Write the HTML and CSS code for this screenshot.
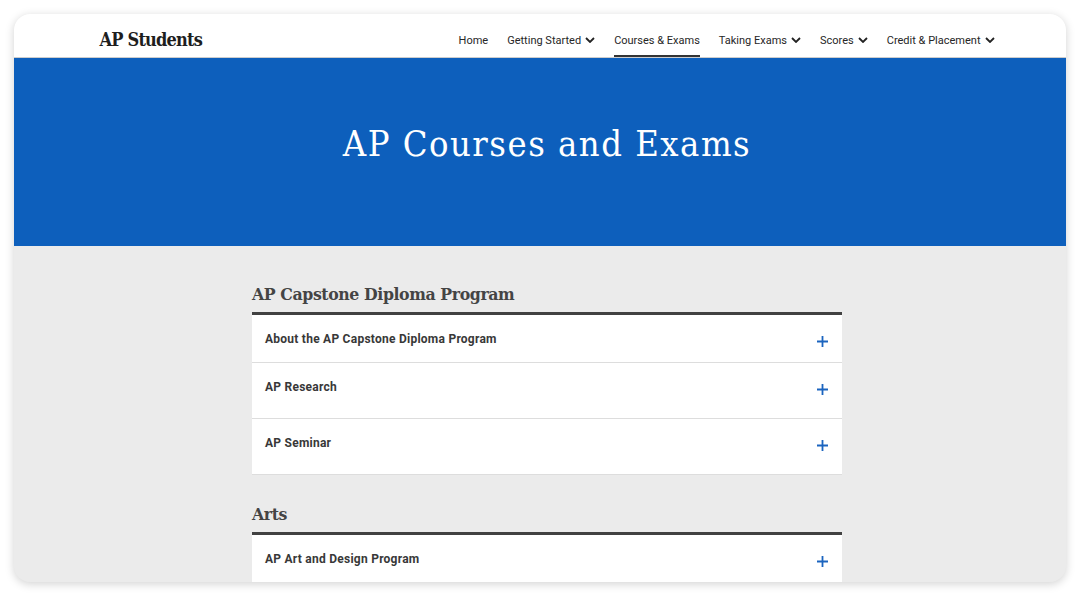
FILE: index.html
```html
<!DOCTYPE html>
<html lang="en">
<head>
<meta charset="utf-8">
<title>AP Courses and Exams</title>
<link rel="stylesheet" href="styles.css">
</head>
<body>
<div class="window">
  <header class="topbar">
    <div class="topbar-inner">
      <a class="brand" href="#">AP Students</a>
      <nav class="nav">
        <a class="nav-link" href="#">Home</a>
        <a class="nav-link" href="#">Getting Started<svg class="chev" viewBox="0 0 10 6" width="10" height="6"><path d="M1 1l4 4 4-4" fill="none" stroke="#222" stroke-width="1.8"/></svg></a>
        <a class="nav-link is-active" href="#">Courses &amp; Exams</a>
        <a class="nav-link" href="#">Taking Exams<svg class="chev" viewBox="0 0 10 6" width="10" height="6"><path d="M1 1l4 4 4-4" fill="none" stroke="#222" stroke-width="1.8"/></svg></a>
        <a class="nav-link" href="#">Scores<svg class="chev" viewBox="0 0 10 6" width="10" height="6"><path d="M1 1l4 4 4-4" fill="none" stroke="#222" stroke-width="1.8"/></svg></a>
        <a class="nav-link" href="#">Credit &amp; Placement<svg class="chev" viewBox="0 0 10 6" width="10" height="6"><path d="M1 1l4 4 4-4" fill="none" stroke="#222" stroke-width="1.8"/></svg></a>
      </nav>
    </div>
  </header>
  <section class="hero">
    <h1 class="hero-title">AP Courses and Exams</h1>
  </section>
  <main class="content">
    <div class="column">
      <section class="group">
        <h2 class="group-title">AP Capstone Diploma Program</h2>
        <ul class="acc">
          <li class="acc-row acc-row--first"><span class="acc-label">About the AP Capstone Diploma Program</span><svg class="plus" viewBox="0 0 11 11" width="11" height="11"><path d="M5.5 0v11M0 5.5h11" stroke="#1b64bf" stroke-width="1.8"/></svg></li>
          <li class="acc-row"><span class="acc-label">AP Research</span><svg class="plus" viewBox="0 0 11 11" width="11" height="11"><path d="M5.5 0v11M0 5.5h11" stroke="#1b64bf" stroke-width="1.8"/></svg></li>
          <li class="acc-row"><span class="acc-label">AP Seminar</span><svg class="plus" viewBox="0 0 11 11" width="11" height="11"><path d="M5.5 0v11M0 5.5h11" stroke="#1b64bf" stroke-width="1.8"/></svg></li>
        </ul>
      </section>
      <section class="group group--next">
        <h2 class="group-title">Arts</h2>
        <ul class="acc">
          <li class="acc-row acc-row--first"><span class="acc-label">AP Art and Design Program</span><svg class="plus" viewBox="0 0 11 11" width="11" height="11"><path d="M5.5 0v11M0 5.5h11" stroke="#1b64bf" stroke-width="1.8"/></svg></li>
        </ul>
      </section>
    </div>
  </main>
</div>
</body>
</html>
```
FILE: styles.css
```css
html, body {
  margin: 0;
  padding: 0;
  background: #ffffff;
}
body {
  font-family: Roboto, "Liberation Sans", Arial, sans-serif;
  width: 1080px;
  height: 597px;
  overflow: hidden;
}
.window {
  margin: 14px;
  width: 1052px;
  height: 568px;
  border-radius: 16px;
  overflow: hidden;
  background: #ebebeb;
  box-shadow: 0 2px 10px rgba(0, 0, 0, 0.18);
  display: flex;
  flex-direction: column;
}
.topbar {
  flex: none;
  height: 43px;
  background: #ffffff;
  border-bottom: 1px solid #cdcdcd;
  padding-left: 14px;
}
.topbar-inner {
  width: 895px;
  height: 100%;
  margin: 0 auto;
  display: flex;
  justify-content: space-between;
  align-items: flex-end;
}
.brand {
  font-family: "DejaVu Serif Condensed", "DejaVu Serif", "Liberation Serif", serif;
  font-stretch: semi-condensed;
  font-weight: bold;
  font-size: 18px;
  line-height: 22px;
  letter-spacing: -0.8px;
  color: #1e1e1e;
  text-decoration: none;
  padding-bottom: 6px;
}
.nav {
  display: flex;
  gap: 19px;
  align-items: flex-end;
}
.nav-link {
  display: flex;
  align-items: center;
  gap: 4px;
  font-size: 11px;
  line-height: 13px;
  color: #262626;
  text-decoration: none;
  padding-bottom: 8px;
  border-bottom: 2px solid transparent;
}
.nav-link.is-active {
  border-bottom-color: #333333;
}
.chev {
  display: block;
  margin-top: -1px;
}
.hero {
  flex: none;
  height: 188px;
  background: #0d5fbc;
  padding-left: 14px;
  display: flex;
  justify-content: center;
}
.hero-title {
  margin: 0;
  padding-top: 64px;
  font-family: "DejaVu Serif Condensed", "DejaVu Serif", "Liberation Serif", serif;
  font-stretch: semi-condensed;
  font-weight: normal;
  font-size: 36px;
  line-height: 44px;
  letter-spacing: 1.5px;
  color: #ffffff;
}
.content {
  flex: 1;
  padding-left: 14px;
}
.column {
  width: 590px;
  margin: 0 auto;
  padding-top: 37px;
}
.group--next {
  margin-top: 28px;
}
.group-title {
  margin: 0;
  font-family: "DejaVu Serif Condensed", "DejaVu Serif", "Liberation Serif", serif;
  font-stretch: semi-condensed;
  font-weight: bold;
  font-size: 17.5px;
  line-height: 22px;
  letter-spacing: -0.4px;
  color: #444444;
  padding-bottom: 7px;
  border-bottom: 3px solid #414141;
}
.acc {
  list-style: none;
  margin: 0;
  padding: 0;
}
.acc-row {
  box-sizing: border-box;
  height: 56px;
  background: #ffffff;
  border-bottom: 1px solid #dddddd;
  padding: 16px 14px 0 13px;
  display: flex;
  justify-content: space-between;
  align-items: flex-start;
}
.acc-row--first {
  height: 48px;
}
.acc-label {
  font-size: 12px;
  line-height: 16px;
  font-weight: bold;
  letter-spacing: 0.25px;
  color: #383838;
}
.plus {
  display: block;
  margin-top: 5px;
}
```
